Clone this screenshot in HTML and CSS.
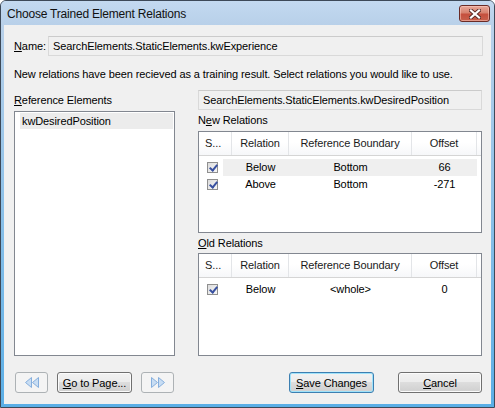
FILE: index.html
```html
<!DOCTYPE html>
<html lang="en">
<head>
    <meta charset="UTF-8">
    <title>Choose Trained Element Relations</title>
    <link rel="stylesheet" href="styles.css">
</head>
<body>
    <div class="window">
        <div class="titlebar">
            <span class="title">Choose Trained Element Relations</span>
            <div class="close">
                <svg width="12" height="10" viewBox="0 0 12 10">
                    <path d="M2 1.5 L10 8.5 M10 1.5 L2 8.5" stroke="#5a2a26" stroke-width="4" stroke-linecap="square"/>
                    <path d="M2 1.5 L10 8.5 M10 1.5 L2 8.5" stroke="#fff" stroke-width="2.2" stroke-linecap="square"/>
                </svg>
            </div>
        </div>
        <div class="frame">
            <div class="client">
                <div class="name-row">
                    <span class="name-label"><u>N</u>ame:</span>
                    <div class="field">SearchElements.StaticElements.kwExperience</div>
                </div>
                <p class="info">New relations have been recieved as a training result. Select relations you would like to use.</p>

                <div class="main">
                    <div class="left-col">
                        <div class="caption"><u>R</u>eference Elements</div>
                        <div class="listbox">
                            <div class="item selected">kwDesiredPosition</div>
                        </div>
                    </div>

                    <div class="right-col">
                        <div class="field">SearchElements.StaticElements.kwDesiredPosition</div>

                        <div class="caption">N<u>e</u>w Relations</div>
                        <div class="listview lv-new">
                            <div class="lv-head">
                                <div class="hcell first">S...</div>
                                <div class="hcell">Relation</div>
                                <div class="hcell">Reference Boundary</div>
                                <div class="hcell">Offset</div>
                                <div class="hcell filler"></div>
                            </div>
                            <div class="lv-row selected">
                                <div class="cell check"><span class="cb"></span><span class="sel-pad"></span></div>
                                <div class="cell">Below</div>
                                <div class="cell">Bottom</div>
                                <div class="cell">66</div>
                            </div>
                            <div class="lv-row">
                                <div class="cell check"><span class="cb"></span><span class="sel-pad"></span></div>
                                <div class="cell">Above</div>
                                <div class="cell">Bottom</div>
                                <div class="cell">-271</div>
                            </div>
                        </div>

                        <div class="caption"><u>O</u>ld Relations</div>
                        <div class="listview lv-old">
                            <div class="lv-head">
                                <div class="hcell first">S...</div>
                                <div class="hcell">Relation</div>
                                <div class="hcell">Reference Boundary</div>
                                <div class="hcell">Offset</div>
                                <div class="hcell filler"></div>
                            </div>
                            <div class="lv-row">
                                <div class="cell check"><span class="cb"></span><span class="sel-pad"></span></div>
                                <div class="cell">Below</div>
                                <div class="cell">&lt;whole&gt;</div>
                                <div class="cell">0</div>
                            </div>
                        </div>
                    </div>
                </div>

                <div class="buttons">
                    <div class="btn nav disabled">
                        <svg width="16" height="11" viewBox="0 0 16 11">
                            <path d="M7.5 0.5 L1.5 5.5 L7.5 10.5 Z M14.5 0.5 L8.5 5.5 L14.5 10.5 Z" fill="#c8ddf3" stroke="#86afdd" stroke-width="1" stroke-linejoin="round"/>
                        </svg>
                    </div>
                    <div class="btn goto"><u>G</u>o to Page...</div>
                    <div class="btn nav disabled">
                        <svg width="16" height="11" viewBox="0 0 16 11">
                            <path d="M1.5 0.5 L7.5 5.5 L1.5 10.5 Z M8.5 0.5 L14.5 5.5 L8.5 10.5 Z" fill="#c8ddf3" stroke="#86afdd" stroke-width="1" stroke-linejoin="round"/>
                        </svg>
                    </div>
                    <div class="btn save default"><u>S</u>ave Changes</div>
                    <div class="btn cancel"><u>C</u>ancel</div>
                </div>
            </div>
        </div>
    </div>
</body>
</html>
```

FILE: styles.css
```css
body { margin: 0; font-family: "Liberation Sans", Arial, sans-serif; font-size: 11px; letter-spacing: -0.1px; color: #000; background: #fff; }
u { text-decoration: underline; text-underline-offset: 1px; }

.window { width: 495px; height: 408px; box-sizing: border-box; border: 1px solid #3d4958; border-radius: 6px 6px 0 0; background: #b9d1ea; display: flex; flex-direction: column; overflow: hidden; }

.titlebar { height: 24px; flex: none; display: flex; justify-content: space-between; padding: 0 4px 0 6px; background: linear-gradient(#c3d9f0, #b8d0e9); }
.title { font-size: 12px; letter-spacing: -0.2px; line-height: 26px; color: #111; }
.close { width: 29px; height: 15px; margin-top: 4px; border: 1px solid #6a2b26; border-radius: 3px; display: flex; align-items: center; justify-content: center;
    background: linear-gradient(#e9a899, #d7826f 45%, #c5503e 55%, #c8604c); box-shadow: inset 0 0 0 1px rgba(255, 210, 200, 0.5); }

.frame { flex: 1; display: flex; padding: 0 3px 3px; background: linear-gradient(to bottom, #b9d1ea, #5aaee6); }
.client { flex: 1; background: #f0f0f0; padding: 11px 8px 0 10px; display: flex; flex-direction: column; }

.name-row { display: flex; align-items: center; }
.name-label { width: 34px; }
.field { flex: 1; height: 20px; box-sizing: border-box; border: 1px solid #d9d9d9; border-top-color: #cbcbcb; background: #f0f0f0; padding-left: 4px; line-height: 18px; white-space: nowrap; }

.info { margin: 12px 0 0; line-height: 13px; }

.main { display: grid; grid-template-columns: 161px 284px; column-gap: 23px; margin-top: 9px; }
.left-col { padding-top: 4px; }
.caption { line-height: 13px; }
.right-col .caption { margin-top: 4px; }

.listbox { margin-top: 4px; height: 245px; box-sizing: border-box; border: 1px solid #828790; background: #fff; padding: 1px 1px 0 5px; }
.item { height: 16px; line-height: 16px; padding-left: 2px; }
.item.selected { background: #ececec; }

.listview { margin-top: 4px; box-sizing: border-box; border: 1px solid #828790; background: #fff; }
.lv-new { height: 102px; }
.lv-old { height: 103px; margin-top: 3px; }

.lv-head, .lv-row { display: grid; grid-template-columns: 33px 57px 123px 65px 1fr; }
.lv-head { height: 23px; border-bottom: 1px solid #d5d5d5; background: linear-gradient(#fff, #fff 45%, #f6f7f9); margin-bottom: 3px; }
.hcell { border-right: 1px solid #e3e5e8; text-align: center; line-height: 23px; color: #1a1a1a; }
.hcell.first { text-align: left; padding-left: 6px; }
.hcell.filler { border-right: none; }

.lv-row { height: 17px; line-height: 17px; }
.cell { text-align: center; }
.cell.check { display: flex; align-items: center; padding-left: 8px; }
.cb { width: 11px; height: 11px; box-sizing: border-box; border: 1px solid #8f8f8f; background: linear-gradient(135deg, #dcdcdc, #f7f7f7);
    position: relative; flex: none; }
.cb::after { content: ""; position: absolute; left: 3px; top: 0px; width: 3px; height: 6px; border: solid #3850a0; border-width: 0 2px 2px 0; transform: rotate(40deg); }
.sel-pad { flex: 1; height: 17px; margin-left: 5px; }
.lv-row.selected .sel-pad, .lv-row.selected .cell:not(.check) { background: #efefef; }

.buttons { display: flex; margin-top: 16px; }
.btn { height: 21px; box-sizing: border-box; border: 1px solid #707070; border-radius: 3px; display: flex; align-items: center; justify-content: center;
    background: linear-gradient(#f2f2f2, #ebebeb 50%, #dddddd 50%, #cfcfcf); box-shadow: inset 0 0 0 1px #fbfbfb; }
.btn.nav { width: 33px; margin-left: 9px; }
.btn.nav:first-child { margin-left: 1px; }
.btn.disabled { border-color: #adb2b5; background: #f4f4f4; box-shadow: none; }
.btn.goto { width: 75px; margin-left: 9px; }
.btn.save { width: 85px; margin-left: auto; }
.btn.default { border-color: #3c7fb1; box-shadow: inset 0 0 0 1px #9fe2fa; }
.btn.cancel { width: 84px; margin-left: 24px; margin-right: 1px; }
```
